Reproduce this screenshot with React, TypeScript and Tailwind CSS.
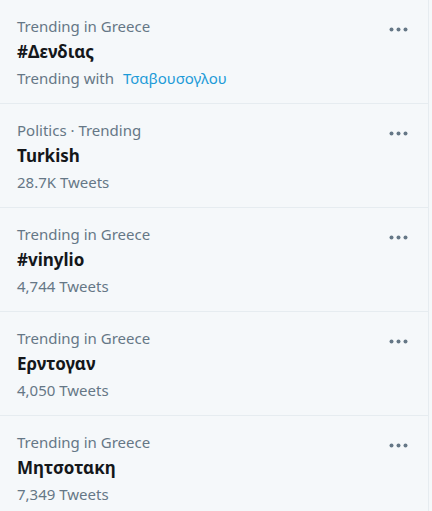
const trends = [
  { context: "Trending in Greece", name: "#Δενδιας", with: "Τσαβουσογλου" },
  { context: "Politics · Trending", name: "Turkish", count: "28.7K Tweets" },
  { context: "Trending in Greece", name: "#vinylio", count: "4,744 Tweets" },
  { context: "Trending in Greece", name: "Ερντογαν", count: "4,050 Tweets" },
  { context: "Trending in Greece", name: "Μητσοτακη", count: "7,349 Tweets" },
];

function Dots() {
  return (
    <svg width="19" height="5" viewBox="0 0 19 5" className="fill-[#657786]">
      <circle cx="2.5" cy="2.5" r="2" />
      <circle cx="9.5" cy="2.5" r="2" />
      <circle cx="16.5" cy="2.5" r="2" />
    </svg>
  );
}

export default function App() {
  return (
    <div
      className="w-[432px] h-[511px] overflow-hidden bg-[#f5f8fa]"
      style={{ fontFamily: '"Noto Sans", "Open Sans", sans-serif' }}
    >
      <div className="w-[429px] border-r border-[#e6ecf0]">
        {trends.map((t, i) => (
          <div
            key={i}
            className="flex justify-between border-b border-[#e6ecf0] pl-[17px] pr-[20px] pt-[14px] h-[104px]"
          >
            <div className="flex flex-col">
              <div className="text-[15px] leading-[25px] text-[#657786]">{t.context}</div>
              <div className="text-[17px] leading-[25px] font-bold text-[#14171a]">{t.name}</div>
              {t.with ? (
                <div className="text-[15px] leading-[28px] text-[#657786]">
                  Trending with <span className="ml-[5px] text-[#1d9bd8]">{t.with}</span>
                </div>
              ) : (
                <div className="text-[15px] leading-[28px] text-[#657786]">{t.count}</div>
              )}
            </div>
            <div className="pt-[13px]">
              <Dots />
            </div>
          </div>
        ))}
      </div>
    </div>
  );
}
